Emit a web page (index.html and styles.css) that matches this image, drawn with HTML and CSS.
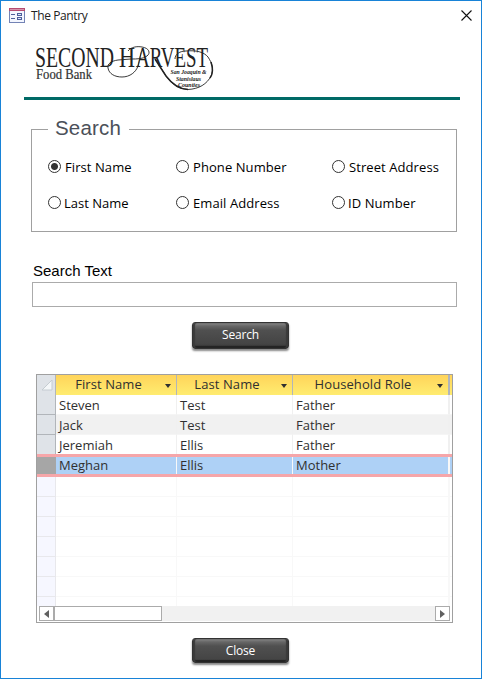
FILE: index.html
```html
<!DOCTYPE html>
<html lang="en">
<head>
<meta charset="utf-8">
<title>The Pantry</title>
<link rel="stylesheet" href="styles.css">
</head>
<body>
<main class="window">
  <header class="titlebar">
    <svg class="form-icon" width="16" height="15" viewBox="0 0 16 15" shape-rendering="crispEdges">
      <path fill="#f3f6ff" stroke="#7383b5" d="M.5.5h15v14H.5z"/>
      <path fill="#b64b71" d="M0 0h16v3H0z"/>
      <path fill="#d692aa" d="M1 1h14v1H1z"/>
      <path stroke="#4e5f9b" d="M2 6.500h4M2 10.500h4"/>
      <path fill="#dce5fa" stroke="#4e5f9b" d="M8.500 5.500h4v2h-4zM8.500 9.500h4v2h-4z"/>
    </svg>
    <span class="title">The Pantry</span>
    <svg class="close-x" width="11" height="11" viewBox="0 0 11 11"><path d="M.5.5l10 10M10.500.5l-10 10" stroke="#111" stroke-width="1.100"/></svg>
  </header>

  <svg class="logo" width="182" height="50" viewBox="0 0 182 50">
    <g class="logo-name">
      <text x="1" y="24" textLength="79" lengthAdjust="spacingAndGlyphs">SECOND</text>
      <text x="85" y="24" textLength="16" lengthAdjust="spacingAndGlyphs">H</text>
      <text x="102" y="24" textLength="72" lengthAdjust="spacingAndGlyphs">ARVEST</text>
    </g>
    <text class="logo-sub" x="2" y="36" textLength="56" lengthAdjust="spacingAndGlyphs">Food Bank</text>
    <g fill="none" stroke="#222" stroke-width=".9">
      <path d="M94 8C97 4 103 3 108 4C115 5 117 10 113 13C109 16 103 16 97 16L84 17C77 18 73 21 74 25C75 31 81 34 88 34C96 34 102 29 104 23C106 17 106 10 109 6"/>
      <path d="M141 16C141 11 146 8 152 8C162 7 170 9 174 14C178 20 180 26 177 33C173 41 165 46 154 46.500C144 46 138 41 132 33L120 14"/>
      <path stroke-width="1.500" d="M121 16L132 33C138 41 144 46 154 46.500M177 19C179 25 179 31 176 35"/>
    </g>
    <g class="logo-region" text-anchor="middle">
      <text x="154.500" y="31" textLength="36" lengthAdjust="spacingAndGlyphs">San Joaquin &amp;</text>
      <text x="154.500" y="37.500" textLength="25" lengthAdjust="spacingAndGlyphs">Stanislaus</text>
      <text x="155" y="43.500" textLength="22" lengthAdjust="spacingAndGlyphs">Counties</text>
    </g>
  </svg>
  <div class="rule"></div>

  <fieldset class="search-by">
    <legend>Search</legend>
    <div class="options">
      <label class="checked"><i class="radio on"></i><span>First Name</span></label>
      <label><i class="radio"></i><span>Phone Number</span></label>
      <label><i class="radio"></i><span>Street Address</span></label>
      <label><i class="radio"></i><span>Last Name</span></label>
      <label><i class="radio"></i><span>Email Address</span></label>
      <label><i class="radio"></i><span>ID Number</span></label>
    </div>
  </fieldset>

  <label class="search-label" for="query">Search Text</label>
  <input class="query" id="query" type="text">
  <button class="button search-button">Search</button>

  <section class="sheet">
    <div class="row head">
      <span class="selector"><svg width="12" height="12" viewBox="0 0 12 12"><path d="M11 1v10H1z" fill="#f4f7f9" stroke="#c5ccd1"/></svg></span>
      <span class="cell"><b>First Name</b><i class="arrow"></i></span>
      <span class="cell"><b>Last Name</b><i class="arrow"></i></span>
      <span class="cell"><b>Household Role</b><i class="arrow"></i></span>
      <span class="cell"></span>
    </div>
    <div class="row"><span class="selector"></span><span class="cell">Steven</span><span class="cell">Test</span><span class="cell">Father</span><span class="cell"></span></div>
    <div class="row alt"><span class="selector"></span><span class="cell">Jack</span><span class="cell">Test</span><span class="cell">Father</span><span class="cell"></span></div>
    <div class="row last"><span class="selector"></span><span class="cell">Jeremiah</span><span class="cell">Ellis</span><span class="cell">Father</span><span class="cell"></span></div>
    <div class="row selected"><span class="selector"></span><span class="cell">Meghan</span><span class="cell">Ellis</span><span class="cell">Mother</span><span class="cell"></span></div>
    <div class="blank">
      <div class="row"><span class="selector"></span><span class="cell"></span><span class="cell"></span><span class="cell"></span><span class="cell"></span></div>
      <div class="row"><span class="selector"></span><span class="cell"></span><span class="cell"></span><span class="cell"></span><span class="cell"></span></div>
      <div class="row"><span class="selector"></span><span class="cell"></span><span class="cell"></span><span class="cell"></span><span class="cell"></span></div>
      <div class="row"><span class="selector"></span><span class="cell"></span><span class="cell"></span><span class="cell"></span><span class="cell"></span></div>
      <div class="row"><span class="selector"></span><span class="cell"></span><span class="cell"></span><span class="cell"></span><span class="cell"></span></div>
      <div class="row"><span class="selector"></span><span class="cell"></span><span class="cell"></span><span class="cell"></span><span class="cell"></span></div>
      <div class="row"><span class="selector"></span><span class="cell"></span><span class="cell"></span><span class="cell"></span><span class="cell"></span></div>
    </div>
    <div class="scrollbar">
      <span class="step"><svg width="5" height="8" viewBox="0 0 5 8"><path d="M5 0v8L0 4z"/></svg></span>
      <span class="thumb"></span>
      <span class="step end"><svg width="5" height="8" viewBox="0 0 5 8"><path d="M0 0v8l5-4z"/></svg></span>
    </div>
  </section>

  <button class="button close-button">Close</button>
</main>
</body>
</html>
```
FILE: styles.css
```css
* { box-sizing: border-box; }
body { margin: 0; }
.window {
  width: 482px; height: 679px;
  border: 1px solid #1883d7;
  background: #fff;
  display: flex; flex-direction: column; align-items: flex-start;
  font-family: "Open Sans", sans-serif;
  font-size: 13px;
  color: #000;
  overflow: hidden;
}
.titlebar {
  display: flex; align-items: center;
  width: 100%; height: 30px; flex: none;
  padding: 0 9px 0 8px;
}
.form-icon { margin-top: -2px; }
.title { margin: -2px 0 0 6px; font-size: 12px; letter-spacing: -.4px; color: #222; }
.close-x { margin-left: auto; margin-top: -2px; }

.logo { display: block; flex: none; margin: 12px 0 0 33px; overflow: visible; }
.logo text { font-family: "Liberation Serif", serif; fill: #222; }
.logo-name text { font-size: 29px; }
.logo .logo-sub { font-size: 14px; fill: #333; stroke: #333; stroke-width: .2px; }
.logo-region text { font-size: 6.5px; font-weight: bold; font-style: italic; }
.rule { width: 436px; height: 3px; flex: none; margin: 4px 0 0 23px; background: #006a66; }

.search-by {
  width: 426px; height: 116px; flex: none;
  margin: 16px 0 0 30px; padding: 0;
  border: 1px solid #a0a0a0;
}
.search-by legend {
  height: 27px; width: 81px;
  margin-left: 16px; padding-left: 7px;
  font: 20.5px/23px "Liberation Sans", sans-serif;
  letter-spacing: .2px;
  color: #4b5059;
}
.options {
  display: grid;
  grid-template-columns: 128px 156px 120px;
  grid-template-rows: 36px 36px;
  padding: 5px 0 0 16px;
}
.options label { display: flex; align-items: center; gap: 4px; white-space: nowrap; letter-spacing: .08px; }
.options label:nth-child(4) { gap: 3px; letter-spacing: 0; }
.options label:nth-child(6) { gap: 3px; }
.options span { padding-top: 2px; }
.radio { width: 13px; height: 13px; border: 1px solid #333; border-radius: 50%; background: #fff; }
.radio.on { background: radial-gradient(circle, #333 3px, #fff 4px); }

.search-label { margin: 30px 0 0 32px; font: 15px/18px "Liberation Sans", sans-serif; }
.query { width: 425px; height: 25px; flex: none; margin: 2px 0 0 31px; border: 1px solid #ababab; background: #fff; padding: 2px; }

.button {
  width: 97px; height: 27px; flex: none;
  margin-left: 191px; padding: 0 0 1px;
  border: 1px solid #333; border-radius: 3px;
  background: linear-gradient(#888 0, #666 3px, #505050 7px, #444 21px, #303030 100%);
  box-shadow: inset 2px 0 1px #3a3a3a, inset -2px 0 1px #3a3a3a, inset 0 -2px 1px #222, 0 2px 2px #888;
  color: #fff;
  font: 12px/18px "Open Sans", sans-serif;
  letter-spacing: -.2px;
}
.search-button { margin-top: 15px; }
.close-button { height: 25px; margin-top: 15px; padding: 0; }

.sheet {
  width: 417px; height: 249px; flex: none;
  margin: 25px 0 0 35px;
  border: 1px solid #a0a0a0;
  display: flex; flex-direction: column;
  overflow: hidden;
  color: #303030;
}
.row {
  display: grid;
  grid-template-columns: 19px 121px 116px 157px 2px;
  grid-template-rows: 100%;
  height: 20px; flex: none;
}
.selector { background: #dfe3e8; border-right: 1px solid #b1b5ba; border-bottom: 1px solid #b1b5ba; }
.cell { border-right: 1px solid #f0f0f0; border-bottom: 1px solid #f5f5f5; padding-left: 3px; line-height: 20px; white-space: nowrap; }
.cell:nth-child(4) { border-right-width: 2px; }
.cell:last-child { border-right: 0; padding: 0; }
.alt .cell { background: #f1f1f1; }
.head .selector { border-bottom: 0; display: flex; justify-content: flex-end; align-items: center; padding-right: 2px; }
.head .cell {
  display: flex; align-items: center; justify-content: center;
  padding: 0 6px 0 0; position: relative;
  background: linear-gradient(#ffd45a, #ffec70);
  border-right-color: #b1b5ba; border-bottom: 0;
}
.head .cell:last-child { padding: 0; }
.head b { font-weight: normal; margin: -2px 9px 0 0; letter-spacing: .08px; }
.arrow { position: absolute; right: 5px; top: 9px; border: 3.500px solid transparent; border-top: 4px solid #303030; border-bottom: 0; }
.row.last { height: 19px; }
.last .selector, .last .cell { border-bottom: 0; }
.selected { height: 23px; border-top: 3px solid #f6a6a9; border-bottom: 3px solid #f6a6a9; }
.selected .cell { background: #aed1f6; border-bottom: 0; line-height: 17px; border-right-color: #f8f8f8; }
.selected .selector { background: #a6a6a6; border: 0; }
.blank { height: 129px; flex: none; overflow: hidden; }
.blank .selector { background: #f6f7ff; border-color: #e8e8ec; }
.blank .cell { border-color: #f8f8f8; }
.scrollbar { display: flex; height: 15px; flex: none; margin: 0 2px; background: #f1f1f1; }
.step { width: 15px; border: 1px solid #ababab; background: #fff; display: flex; align-items: center; justify-content: center; }
.step path { fill: #606060; }
.thumb { width: 108px; border: 1px solid #ababab; background: #fff; }
.step.end { margin-left: auto; }
```
